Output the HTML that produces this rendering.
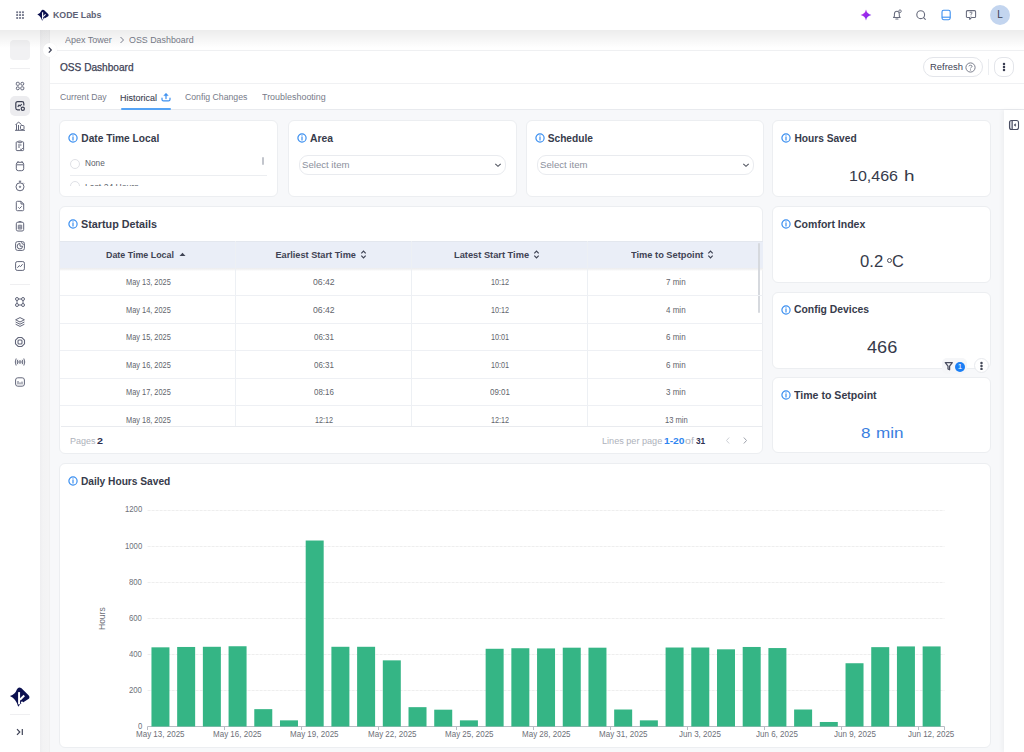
<!DOCTYPE html>
<html><head><meta charset="utf-8">
<style>
*{box-sizing:border-box;margin:0;padding:0}
html,body{width:1024px;height:752px;overflow:hidden;background:#f7f8fa;font-family:"Liberation Sans",sans-serif;color:#363a4a;position:relative}
.abs{position:absolute}
.t{position:absolute;white-space:nowrap}
#top{position:absolute;left:0;top:0;width:1024px;height:30px;background:#fff;z-index:5}
#topshadow{position:absolute;left:0;top:30px;width:1024px;height:18px;background:linear-gradient(rgba(0,0,0,0.075),rgba(0,0,0,0));z-index:6;pointer-events:none}
#side{position:absolute;left:0;top:30px;width:40px;height:722px;background:#fff;z-index:3}
#strip{position:absolute;left:40px;top:30px;width:10px;height:722px;background:linear-gradient(90deg,#eeeef0,#f3f3f4 30%,#f4f4f5 85%,#eeeeef);z-index:2}
#hdr{position:absolute;left:50px;top:30px;width:974px;height:80px;background:#fff}
.hline{position:absolute;height:1px;background:#eceef1}
.card{position:absolute;background:#fff;border:1px solid #eceef1;border-radius:6px}
.ttl{position:absolute;font-weight:bold;font-size:11px;line-height:14px;color:#373b4b;white-space:nowrap}
.kttl{position:absolute;font-weight:bold;font-size:10px;line-height:14px;color:#373b4b;white-space:nowrap}
.info{position:absolute;width:9px;height:9px}
.sel{position:absolute;height:20px;border:1px solid #e9ebef;border-radius:9px;background:#fff}
.sel span{position:absolute;left:3px;top:3px;font-size:10px;line-height:12px;color:#8b909c}
.sel svg{position:absolute;right:3px;top:5px}
.kval{position:absolute;left:0;width:216px;text-align:center;font-size:17px;line-height:20px;color:#363a4a;white-space:nowrap}
.th{position:absolute;top:241px;height:28px;width:176px;text-align:center;font-weight:bold;font-size:9.5px;line-height:28px;color:#3f4354;white-space:nowrap}
.td{position:absolute;width:120px;text-align:center;font-size:8px;line-height:12px;color:#4b4f5e;white-space:nowrap}
.hl{position:absolute;left:60px;width:703px;height:1px;background:#eef0f4}
.vl{position:absolute;width:1px;background:#edf0f4}
.xl{font-size:9px;fill:#6e7079;font-family:"Liberation Sans",sans-serif}
.yl{font-size:8.5px;fill:#6e7079;font-family:"Liberation Sans",sans-serif}
.si{position:absolute;left:14px;width:12px;height:12px}

</style></head><body>
<div id="hdr"></div>
<div class="hline" style="left:57px;top:50px;width:967px;background:#eff0f2"></div>
<div class="hline" style="left:50px;top:83px;width:974px;background:#f0f1f3"></div>
<div class="hline" style="left:50px;top:109px;width:974px;background:#e8eaee"></div>

<!-- breadcrumb -->
<div class="t" style="left:65.46px;top:36.35px;font-size:8.8px;line-height:8.8px;color:#777b89;font-weight:normal;transform:scaleX(1.023);transform-origin:0 0;">Apex Tower</div>
<svg class="abs" style="left:118px;top:36px" width="8" height="8" viewBox="0 0 8 8"><path d="M2.5 1 L5.5 4 L2.5 7" fill="none" stroke="#7c8090" stroke-width="1"/></svg>
<div class="t" style="left:129.17px;top:36.35px;font-size:8.8px;line-height:8.8px;color:#777b89;font-weight:normal;transform:scaleX(1.008);transform-origin:0 0;">OSS Dashboard</div>

<!-- title -->
<div class="t" style="left:59.69px;top:62.23px;font-size:10.6px;line-height:10.6px;color:#3d4155;font-weight:normal;transform:scaleX(0.954);transform-origin:0 0;-webkit-text-stroke:0.25px #3d4155;">OSS Dashboard</div>
<div class="abs" style="left:923px;top:57px;width:60px;height:20px;border:1px solid #e3e5ea;border-radius:10px;background:#fff"></div>
<div class="t" style="left:930.43px;top:62.51px;font-size:9.2px;line-height:9.2px;color:#3f4356;font-weight:normal;transform:scaleX(1.024);transform-origin:0 0;">Refresh</div>
<svg class="abs" style="left:965px;top:62px" width="11" height="11" viewBox="0 0 11 11"><circle cx="5.5" cy="5.5" r="4.6" fill="none" stroke="#7a7e8c" stroke-width="1"/><path d="M3.9 4.3 C3.9 2.9 7.1 2.9 7.1 4.3 C7.1 5.3 5.5 5.3 5.5 6.4" fill="none" stroke="#7a7e8c" stroke-width="1"/><circle cx="5.5" cy="7.9" r="0.6" fill="#7a7e8c"/></svg>
<div class="abs" style="left:988px;top:59px;width:1px;height:16px;background:#eceef1"></div>
<div class="abs" style="left:994px;top:57px;width:20px;height:20px;border:1px solid #e3e5ea;border-radius:8px;background:#fff"></div>
<svg class="abs" style="left:1000px;top:61px" width="8" height="12" viewBox="0 0 8 12"><circle cx="4" cy="2.9" r="1.25" fill="#3a3e52"/><circle cx="4" cy="6" r="1.25" fill="#3a3e52"/><circle cx="4" cy="9.1" r="1.25" fill="#3a3e52"/></svg>

<!-- tabs -->
<div class="t" style="left:59.58px;top:93.31px;font-size:9.2px;line-height:9.2px;color:#777b89;font-weight:normal;transform:scaleX(0.940);transform-origin:0 0;">Current Day</div>
<div class="t" style="left:120.26px;top:93.51px;font-size:9.2px;line-height:9.2px;color:#3a3e50;font-weight:normal;transform:scaleX(0.977);transform-origin:0 0;-webkit-text-stroke:0.1px #3a3e50;">Historical</div>
<svg class="abs" style="left:161px;top:92px" width="10" height="10" viewBox="0 0 10 10"><path d="M5 6.6 V3" fill="none" stroke="#3b8ff0" stroke-width="1.2" stroke-linecap="round"/><path d="M2.8 3.6 L5 1.2 L7.2 3.6 Z" fill="#3b8ff0" stroke="#3b8ff0" stroke-width="0.5" stroke-linejoin="round"/><path d="M1 6.2 V7.4 Q1 8.9 2.5 8.9 H7.5 Q9 8.9 9 7.4 V6.2" fill="none" stroke="#3b8ff0" stroke-width="1.2" stroke-linecap="round"/></svg>
<div class="abs" style="left:121px;top:107.5px;width:50px;height:2px;background:#55a3f5;border-radius:1px"></div>
<div class="t" style="left:185.18px;top:93.31px;font-size:9.2px;line-height:9.2px;color:#777b89;font-weight:normal;transform:scaleX(0.947);transform-origin:0 0;">Config Changes</div>
<div class="t" style="left:262.26px;top:93.31px;font-size:9.2px;line-height:9.2px;color:#777b89;font-weight:normal;transform:scaleX(0.973);transform-origin:0 0;">Troubleshooting</div>

<!-- right panel -->
<div class="abs" style="left:1004px;top:110px;width:20px;height:642px;background:#fff;box-shadow:-2px 0 4px rgba(0,0,0,0.04)"></div>
<svg class="abs" style="left:1008px;top:119px" width="12" height="12" viewBox="0 0 12 12"><rect x="1.8" y="1.8" width="2.4" height="8.4" fill="#d5d7de"/><rect x="1.5" y="1.5" width="9" height="9" rx="2" fill="none" stroke="#4a4e62" stroke-width="1.1"/><path d="M4.2 1.5 V10.5" stroke="#4a4e62" stroke-width="1.1"/><path d="M7.6 4.8 L6 6 L7.6 7.2 Z" fill="#4a4e62" stroke="#4a4e62" stroke-width="0.6" stroke-linejoin="round"/></svg>

<!-- cards -->
<div class="card" style="left:59px;top:120px;width:219px;height:77px"></div>
<div class="card" style="left:288px;top:120px;width:229px;height:77px"></div>
<div class="card" style="left:526px;top:120px;width:238px;height:77px"></div>
<div class="card" style="left:772px;top:120px;width:219px;height:77px"></div>
<div class="card" style="left:59px;top:206px;width:704px;height:248px;overflow:hidden"></div>
<div class="card" style="left:772px;top:206px;width:219px;height:77px"></div>
<div class="card" style="left:772px;top:292px;width:219px;height:77px"></div>
<div class="card" style="left:772px;top:377px;width:219px;height:76px"></div>
<div class="card" style="left:59px;top:463px;width:932px;height:285px"></div>

<!-- filter cards -->
<div class="info" style="left:68px;top:134px"><svg width="10" height="10" viewBox="0 0 10 10" style="position:absolute;left:-0.5px;top:-0.8px"><circle cx="5" cy="5" r="4.1" fill="none" stroke="#3b8ff0" stroke-width="1.2"/><path d="M5 4.4 V7" stroke="#3b8ff0" stroke-width="1.2" stroke-linecap="round"/><circle cx="5" cy="2.9" r="0.65" fill="#3b8ff0"/></svg></div>
<div class="t" style="left:81.29px;top:133.87px;font-size:10.2px;line-height:10.2px;color:#373b4b;font-weight:bold;">Date Time Local</div>
<div class="abs" style="left:70px;top:158.5px;width:10px;height:10px;border:1px solid #dfe1e6;border-radius:50%"></div>
<div class="t" style="left:84.60px;top:159.22px;font-size:8.6px;line-height:8.6px;color:#5a5e68;font-weight:normal;transform:scaleX(0.960);transform-origin:0 0;">None</div>
<div class="abs" style="left:262px;top:157px;width:2px;height:8px;background:#c2c5cc;border-radius:1px"></div>
<div class="abs" style="left:70px;top:175px;width:197px;height:1px;background:#eceef1"></div>
<div class="abs" style="left:64px;top:179px;width:210px;height:7px;overflow:hidden">
  <div class="abs" style="left:6px;top:2px;width:10px;height:10px;border:1px solid #dfe1e6;border-radius:50%"></div>
  <div class="t" style="left:21px;top:3px;font-size:8.6px;line-height:11px;color:#5a5e68">Last 24 Hours</div>
</div>

<div class="info" style="left:297px;top:134px"><svg width="10" height="10" viewBox="0 0 10 10" style="position:absolute;left:-0.5px;top:-0.8px"><circle cx="5" cy="5" r="4.1" fill="none" stroke="#3b8ff0" stroke-width="1.2"/><path d="M5 4.4 V7" stroke="#3b8ff0" stroke-width="1.2" stroke-linecap="round"/><circle cx="5" cy="2.9" r="0.65" fill="#3b8ff0"/></svg></div>
<div class="t" style="left:309.58px;top:133.97px;font-size:10.2px;line-height:10.2px;color:#373b4b;font-weight:bold;transform:scaleX(1.017);transform-origin:0 0;">Area</div>
<div class="sel" style="left:299px;top:155px;width:207px"><svg width="8" height="8" viewBox="0 0 8 8"><path d="M1.3 2.8 L4 5.3 L6.7 2.8" fill="none" stroke="#50545f" stroke-width="1.1"/></svg></div>

<div class="info" style="left:535px;top:134px"><svg width="10" height="10" viewBox="0 0 10 10" style="position:absolute;left:-0.5px;top:-0.8px"><circle cx="5" cy="5" r="4.1" fill="none" stroke="#3b8ff0" stroke-width="1.2"/><path d="M5 4.4 V7" stroke="#3b8ff0" stroke-width="1.2" stroke-linecap="round"/><circle cx="5" cy="2.9" r="0.65" fill="#3b8ff0"/></svg></div>
<div class="t" style="left:547.69px;top:133.97px;font-size:10.2px;line-height:10.2px;color:#373b4b;font-weight:bold;">Schedule</div>
<div class="sel" style="left:537px;top:155px;width:217px"><svg width="8" height="8" viewBox="0 0 8 8"><path d="M1.3 2.8 L4 5.3 L6.7 2.8" fill="none" stroke="#50545f" stroke-width="1.1"/></svg></div>

<div class="t" style="left:301.82px;top:160.44px;font-size:9.4px;line-height:9.4px;color:#8b909c;font-weight:normal;transform:scaleX(1.024);transform-origin:0 0;">Select item</div><div class="t" style="left:539.82px;top:160.44px;font-size:9.4px;line-height:9.4px;color:#8b909c;font-weight:normal;transform:scaleX(1.024);transform-origin:0 0;">Select item</div>
<!-- KPI cards -->
<div class="info" style="left:781px;top:134px"><svg width="10" height="10" viewBox="0 0 10 10" style="position:absolute;left:-0.5px;top:-0.8px"><circle cx="5" cy="5" r="4.1" fill="none" stroke="#3b8ff0" stroke-width="1.2"/><path d="M5 4.4 V7" stroke="#3b8ff0" stroke-width="1.2" stroke-linecap="round"/><circle cx="5" cy="2.9" r="0.65" fill="#3b8ff0"/></svg></div>
<div class="t" style="left:794.39px;top:134.07px;font-size:10.2px;line-height:10.2px;color:#373b4b;font-weight:bold;">Hours Saved</div>
<div class="t" style="left:849.34px;top:167.85px;font-size:15.3px;line-height:15.3px;color:#363a4a;font-weight:normal;transform:scaleX(1.047);transform-origin:0 0;">10,466</div><div class="t" style="left:904.37px;top:167.85px;font-size:15.3px;line-height:15.3px;color:#363a4a;font-weight:normal;transform:scaleX(1.233);transform-origin:0 0;">h</div>

<div class="info" style="left:781px;top:220px"><svg width="10" height="10" viewBox="0 0 10 10" style="position:absolute;left:-0.5px;top:-0.8px"><circle cx="5" cy="5" r="4.1" fill="none" stroke="#3b8ff0" stroke-width="1.2"/><path d="M5 4.4 V7" stroke="#3b8ff0" stroke-width="1.2" stroke-linecap="round"/><circle cx="5" cy="2.9" r="0.65" fill="#3b8ff0"/></svg></div>
<div class="t" style="left:794.37px;top:220.17px;font-size:10.2px;line-height:10.2px;color:#373b4b;font-weight:bold;transform:scaleX(1.033);transform-origin:0 0;">Comfort Index</div>
<div class="t" style="left:860.40px;top:253.59px;font-size:15.6px;line-height:15.6px;color:#363a4a;font-weight:normal;transform:scaleX(1.069);transform-origin:0 0;">0.2</div><div class="abs" style="left:887.2px;top:257.9px;width:5px;height:5px;border:1.2px solid #4a4e5c;border-radius:50%"></div><div class="t" style="left:892.02px;top:253.59px;font-size:15.6px;line-height:15.6px;color:#363a4a;font-weight:normal;transform:scaleX(1.051);transform-origin:0 0;">C</div>

<div class="info" style="left:781px;top:306px"><svg width="10" height="10" viewBox="0 0 10 10" style="position:absolute;left:-0.5px;top:-0.8px"><circle cx="5" cy="5" r="4.1" fill="none" stroke="#3b8ff0" stroke-width="1.2"/><path d="M5 4.4 V7" stroke="#3b8ff0" stroke-width="1.2" stroke-linecap="round"/><circle cx="5" cy="2.9" r="0.65" fill="#3b8ff0"/></svg></div>
<div class="t" style="left:794.18px;top:305.37px;font-size:10.2px;line-height:10.2px;color:#373b4b;font-weight:bold;transform:scaleX(1.020);transform-origin:0 0;">Config Devices</div>
<div class="t" style="left:866.91px;top:339.76px;font-size:16px;line-height:16px;color:#363a4a;font-weight:normal;transform:scaleX(1.132);transform-origin:0 0;">466</div>
<div class="abs" style="left:941.5px;top:358px;width:25px;height:16px;background:#f5f6f8;border-radius:5px"></div>
<svg class="abs" style="left:944px;top:361px" width="10" height="10" viewBox="0 0 10 10"><path d="M1.3 1.6 H8.3 L5.6 5.1 V8.8 L4 8 V5.1 Z" fill="none" stroke="#4a4e60" stroke-width="1.25" stroke-linejoin="round"/></svg>
<div class="abs" style="left:955px;top:361.6px;width:10.2px;height:10.2px;border-radius:50%;background:#1b7ff5;color:#fff;font-size:8px;line-height:10.2px;text-align:center">1</div>
<div class="abs" style="left:974px;top:358px;width:15px;height:15px;border:1px solid #e8eaee;border-radius:50%;background:#fff"></div>
<svg class="abs" style="left:977px;top:361px" width="9" height="9" viewBox="0 0 9 9"><circle cx="4.5" cy="1.9" r="1.25" fill="#444858"/><circle cx="4.5" cy="4.9" r="1.25" fill="#444858"/><circle cx="4.5" cy="7.9" r="1.25" fill="#444858"/></svg>

<div class="info" style="left:781px;top:391px"><svg width="10" height="10" viewBox="0 0 10 10" style="position:absolute;left:-0.5px;top:-0.8px"><circle cx="5" cy="5" r="4.1" fill="none" stroke="#3b8ff0" stroke-width="1.2"/><path d="M5 4.4 V7" stroke="#3b8ff0" stroke-width="1.2" stroke-linecap="round"/><circle cx="5" cy="2.9" r="0.65" fill="#3b8ff0"/></svg></div>
<div class="t" style="left:794.36px;top:390.87px;font-size:10.2px;line-height:10.2px;color:#373b4b;font-weight:bold;transform:scaleX(1.038);transform-origin:0 0;">Time to Setpoint</div>
<div class="t" style="left:860.67px;top:424.95px;font-size:15.3px;line-height:15.3px;color:#3a7ee0;font-weight:normal;transform:scaleX(1.118);transform-origin:0 0;">8</div><div class="t" style="left:876.28px;top:424.95px;font-size:15.3px;line-height:15.3px;color:#3a7ee0;font-weight:normal;transform:scaleX(1.116);transform-origin:0 0;">min</div>

<!-- startup details -->
<div class="info" style="left:68px;top:220px"><svg width="10" height="10" viewBox="0 0 10 10" style="position:absolute;left:-0.5px;top:-0.8px"><circle cx="5" cy="5" r="4.1" fill="none" stroke="#3b8ff0" stroke-width="1.2"/><path d="M5 4.4 V7" stroke="#3b8ff0" stroke-width="1.2" stroke-linecap="round"/><circle cx="5" cy="2.9" r="0.65" fill="#3b8ff0"/></svg></div>
<div class="t" style="left:80.85px;top:219.67px;font-size:10.2px;line-height:10.2px;color:#373b4b;font-weight:bold;transform:scaleX(1.058);transform-origin:0 0;">Startup Details</div>
<div class="abs" style="left:60px;top:241px;width:703px;height:27px;background:#eaeef7;border-top:1px solid #e3e7ee"></div>
<div class="abs" style="left:60px;top:268px;width:703px;height:3px;background:linear-gradient(#ececee,#f4f4f5 60%,rgba(255,255,255,0))"></div>
<div class="t" style="left:106.37px;top:250.91px;font-size:9.2px;line-height:9.2px;color:#3f4354;font-weight:bold;transform:scaleX(0.967);transform-origin:0 0;">Date Time Local</div>
<svg class="abs" style="left:179px;top:252px" width="7" height="5" viewBox="0 0 7 5"><path d="M0.5 4 L3.5 0.8 L6.5 4 Z" fill="#3f4354"/></svg>
<div class="t" style="left:275.45px;top:250.91px;font-size:9.2px;line-height:9.2px;color:#3f4354;font-weight:bold;">Earliest Start Time</div>
<svg class="abs" style="left:359.6px;top:250px" width="7" height="9" viewBox="0 0 7 9"><path d="M1.3 3.4 L3.5 1.2 L5.7 3.4 M1.3 5.6 L3.5 7.8 L5.7 5.6" fill="none" stroke="#3f4354" stroke-width="1.2"/></svg>
<div class="t" style="left:453.64px;top:250.91px;font-size:9.2px;line-height:9.2px;color:#3f4354;font-weight:bold;transform:scaleX(1.009);transform-origin:0 0;">Latest Start Time</div>
<svg class="abs" style="left:532.8px;top:250px" width="7" height="9" viewBox="0 0 7 9"><path d="M1.3 3.4 L3.5 1.2 L5.7 3.4 M1.3 5.6 L3.5 7.8 L5.7 5.6" fill="none" stroke="#3f4354" stroke-width="1.2"/></svg>
<div class="t" style="left:630.64px;top:250.91px;font-size:9.2px;line-height:9.2px;color:#3f4354;font-weight:bold;transform:scaleX(1.009);transform-origin:0 0;">Time to Setpoint</div>
<svg class="abs" style="left:707.2px;top:250px" width="7" height="9" viewBox="0 0 7 9"><path d="M1.3 3.4 L3.5 1.2 L5.7 3.4 M1.3 5.6 L3.5 7.8 L5.7 5.6" fill="none" stroke="#3f4354" stroke-width="1.2"/></svg>
<div class="vl" style="left:235px;top:241px;height:186px"></div>
<div class="vl" style="left:411px;top:241px;height:186px"></div>
<div class="vl" style="left:587px;top:241px;height:186px"></div>
<div class="abs" style="left:757.5px;top:243px;width:2.5px;height:70px;background:#d6d9de;border-radius:1px"></div>
<div class="t" style="left:125.58px;top:278.25px;font-size:8.8px;line-height:8.8px;color:#62656c;font-weight:normal;transform:scaleX(0.841);transform-origin:0 0;">May 13, 2025</div><div class="t" style="left:313.17px;top:278.25px;font-size:8.8px;line-height:8.8px;color:#62656c;font-weight:normal;transform:scaleX(0.984);transform-origin:0 0;">06:42</div><div class="t" style="left:490.94px;top:278.25px;font-size:8.8px;line-height:8.8px;color:#62656c;font-weight:normal;transform:scaleX(0.823);transform-origin:0 0;">10:12</div><div class="t" style="left:666.20px;top:278.25px;font-size:8.8px;line-height:8.8px;color:#62656c;font-weight:normal;transform:scaleX(0.911);transform-origin:0 0;">7 min</div><div class="hl" style="top:295px"></div><div class="t" style="left:125.58px;top:305.70px;font-size:8.8px;line-height:8.8px;color:#62656c;font-weight:normal;transform:scaleX(0.841);transform-origin:0 0;">May 14, 2025</div><div class="t" style="left:313.17px;top:305.70px;font-size:8.8px;line-height:8.8px;color:#62656c;font-weight:normal;transform:scaleX(0.984);transform-origin:0 0;">06:42</div><div class="t" style="left:490.94px;top:305.70px;font-size:8.8px;line-height:8.8px;color:#62656c;font-weight:normal;transform:scaleX(0.823);transform-origin:0 0;">10:12</div><div class="t" style="left:666.20px;top:305.70px;font-size:8.8px;line-height:8.8px;color:#62656c;font-weight:normal;transform:scaleX(0.911);transform-origin:0 0;">4 min</div><div class="hl" style="top:323px"></div><div class="t" style="left:125.58px;top:333.15px;font-size:8.8px;line-height:8.8px;color:#62656c;font-weight:normal;transform:scaleX(0.841);transform-origin:0 0;">May 15, 2025</div><div class="t" style="left:314.05px;top:333.15px;font-size:8.8px;line-height:8.8px;color:#62656c;font-weight:normal;transform:scaleX(0.904);transform-origin:0 0;">06:31</div><div class="t" style="left:490.94px;top:333.15px;font-size:8.8px;line-height:8.8px;color:#62656c;font-weight:normal;transform:scaleX(0.823);transform-origin:0 0;">10:01</div><div class="t" style="left:666.20px;top:333.15px;font-size:8.8px;line-height:8.8px;color:#62656c;font-weight:normal;transform:scaleX(0.911);transform-origin:0 0;">6 min</div><div class="hl" style="top:350px"></div><div class="t" style="left:125.58px;top:360.60px;font-size:8.8px;line-height:8.8px;color:#62656c;font-weight:normal;transform:scaleX(0.841);transform-origin:0 0;">May 16, 2025</div><div class="t" style="left:314.05px;top:360.60px;font-size:8.8px;line-height:8.8px;color:#62656c;font-weight:normal;transform:scaleX(0.904);transform-origin:0 0;">06:31</div><div class="t" style="left:490.94px;top:360.60px;font-size:8.8px;line-height:8.8px;color:#62656c;font-weight:normal;transform:scaleX(0.823);transform-origin:0 0;">10:01</div><div class="t" style="left:666.20px;top:360.60px;font-size:8.8px;line-height:8.8px;color:#62656c;font-weight:normal;transform:scaleX(0.911);transform-origin:0 0;">6 min</div><div class="hl" style="top:378px"></div><div class="t" style="left:125.58px;top:388.05px;font-size:8.8px;line-height:8.8px;color:#62656c;font-weight:normal;transform:scaleX(0.841);transform-origin:0 0;">May 17, 2025</div><div class="t" style="left:314.05px;top:388.05px;font-size:8.8px;line-height:8.8px;color:#62656c;font-weight:normal;transform:scaleX(0.904);transform-origin:0 0;">08:16</div><div class="t" style="left:490.05px;top:388.05px;font-size:8.8px;line-height:8.8px;color:#62656c;font-weight:normal;transform:scaleX(0.904);transform-origin:0 0;">09:01</div><div class="t" style="left:666.20px;top:388.05px;font-size:8.8px;line-height:8.8px;color:#62656c;font-weight:normal;transform:scaleX(0.911);transform-origin:0 0;">3 min</div><div class="hl" style="top:405px"></div><div class="t" style="left:125.58px;top:415.50px;font-size:8.8px;line-height:8.8px;color:#62656c;font-weight:normal;transform:scaleX(0.841);transform-origin:0 0;">May 18, 2025</div><div class="t" style="left:314.94px;top:415.50px;font-size:8.8px;line-height:8.8px;color:#62656c;font-weight:normal;transform:scaleX(0.823);transform-origin:0 0;">12:12</div><div class="t" style="left:490.94px;top:415.50px;font-size:8.8px;line-height:8.8px;color:#62656c;font-weight:normal;transform:scaleX(0.823);transform-origin:0 0;">12:12</div><div class="t" style="left:664.62px;top:415.50px;font-size:8.8px;line-height:8.8px;color:#62656c;font-weight:normal;transform:scaleX(0.862);transform-origin:0 0;">13 min</div>
<div class="abs" style="left:61px;top:426px;width:701px;height:1px;background:#e9ebef"></div>
<div class="t" style="left:69.66px;top:435.77px;font-size:9.6px;line-height:9.6px;color:#aeb2bb;font-weight:normal;transform:scaleX(0.937);transform-origin:0 0;">Pages</div><div class="t" style="left:96.65px;top:435.77px;font-size:9.6px;line-height:9.6px;color:#2c3050;font-weight:bold;transform:scaleX(1.120);transform-origin:0 0;">2</div>
<div class="t" style="left:602.15px;top:435.77px;font-size:9.6px;line-height:9.6px;color:#aeb2bb;font-weight:normal;transform:scaleX(0.949);transform-origin:0 0;">Lines per page</div><div class="t" style="left:663.58px;top:435.77px;font-size:9.6px;line-height:9.6px;color:#2f86f0;font-weight:bold;transform:scaleX(1.069);transform-origin:0 0;">1-20</div><div class="t" style="left:684.86px;top:435.77px;font-size:9.6px;line-height:9.6px;color:#aeb2bb;font-weight:normal;transform:scaleX(1.108);transform-origin:0 0;">of</div><div class="t" style="left:695.90px;top:435.77px;font-size:9.6px;line-height:9.6px;color:#2c3050;font-weight:bold;transform:scaleX(0.865);transform-origin:0 0;">31</div>
<svg class="abs" style="left:724px;top:436px" width="8" height="9" viewBox="0 0 8 9"><path d="M5.2 1.5 L2.5 4.5 L5.2 7.5" fill="none" stroke="#cdd0d6" stroke-width="1"/></svg>
<svg class="abs" style="left:741px;top:436px" width="8" height="9" viewBox="0 0 8 9"><path d="M2.8 1.5 L5.5 4.5 L2.8 7.5" fill="none" stroke="#9ea2ac" stroke-width="1"/></svg>

<!-- chart -->
<div class="info" style="left:68px;top:477px"><svg width="10" height="10" viewBox="0 0 10 10" style="position:absolute;left:-0.5px;top:-0.8px"><circle cx="5" cy="5" r="4.1" fill="none" stroke="#3b8ff0" stroke-width="1.2"/><path d="M5 4.4 V7" stroke="#3b8ff0" stroke-width="1.2" stroke-linecap="round"/><circle cx="5" cy="2.9" r="0.65" fill="#3b8ff0"/></svg></div>
<div class="t" style="left:80.89px;top:476.87px;font-size:10.2px;line-height:10.2px;color:#373b4b;font-weight:bold;">Daily Hours Saved</div>
<svg class="abs" style="left:0;top:0" width="1024" height="752" viewBox="0 0 1024 752"><line x1="147.6" y1="690.5" x2="944.5" y2="690.5" stroke="#eeeeee" stroke-width="1" stroke-dasharray="3,1"/><line x1="147.6" y1="654.5" x2="944.5" y2="654.5" stroke="#eeeeee" stroke-width="1" stroke-dasharray="3,1"/><line x1="147.6" y1="618.5" x2="944.5" y2="618.5" stroke="#eeeeee" stroke-width="1" stroke-dasharray="3,1"/><line x1="147.6" y1="582.5" x2="944.5" y2="582.5" stroke="#eeeeee" stroke-width="1" stroke-dasharray="3,1"/><line x1="147.6" y1="546.5" x2="944.5" y2="546.5" stroke="#eeeeee" stroke-width="1" stroke-dasharray="3,1"/><line x1="147.6" y1="510.5" x2="944.5" y2="510.5" stroke="#eeeeee" stroke-width="1" stroke-dasharray="3,1"/><line x1="147.6" y1="726.5" x2="944.5" y2="726.5" stroke="#b9bcc4" stroke-width="1"/><rect x="151.46" y="647.33" width="17.99" height="79.17" fill="#35b585"/><rect x="177.16" y="646.97" width="17.99" height="79.53" fill="#35b585"/><rect x="202.87" y="646.79" width="17.99" height="79.71" fill="#35b585"/><rect x="228.58" y="646.25" width="17.99" height="80.25" fill="#35b585"/><rect x="254.28" y="709.15" width="17.99" height="17.35" fill="#35b585"/><rect x="279.99" y="720.35" width="17.99" height="6.15" fill="#35b585"/><rect x="305.69" y="540.51" width="17.99" height="185.99" fill="#35b585"/><rect x="331.40" y="646.79" width="17.99" height="79.71" fill="#35b585"/><rect x="357.11" y="646.79" width="17.99" height="79.71" fill="#35b585"/><rect x="382.81" y="660.35" width="17.99" height="66.15" fill="#35b585"/><rect x="408.52" y="707.16" width="17.99" height="19.34" fill="#35b585"/><rect x="434.23" y="709.69" width="17.99" height="16.81" fill="#35b585"/><rect x="459.93" y="720.35" width="17.99" height="6.15" fill="#35b585"/><rect x="485.64" y="648.78" width="17.99" height="77.72" fill="#35b585"/><rect x="511.35" y="648.24" width="17.99" height="78.26" fill="#35b585"/><rect x="537.05" y="648.42" width="17.99" height="78.08" fill="#35b585"/><rect x="562.76" y="647.69" width="17.99" height="78.81" fill="#35b585"/><rect x="588.47" y="647.69" width="17.99" height="78.81" fill="#35b585"/><rect x="614.17" y="709.51" width="17.99" height="16.99" fill="#35b585"/><rect x="639.88" y="720.35" width="17.99" height="6.15" fill="#35b585"/><rect x="665.59" y="647.51" width="17.99" height="78.99" fill="#35b585"/><rect x="691.29" y="647.51" width="17.99" height="78.99" fill="#35b585"/><rect x="717.00" y="649.32" width="17.99" height="77.18" fill="#35b585"/><rect x="742.70" y="646.97" width="17.99" height="79.53" fill="#35b585"/><rect x="768.41" y="648.05" width="17.99" height="78.45" fill="#35b585"/><rect x="794.12" y="709.51" width="17.99" height="16.99" fill="#35b585"/><rect x="819.82" y="721.98" width="17.99" height="4.52" fill="#35b585"/><rect x="845.53" y="663.24" width="17.99" height="63.26" fill="#35b585"/><rect x="871.24" y="647.15" width="17.99" height="79.35" fill="#35b585"/><rect x="896.94" y="646.43" width="17.99" height="80.07" fill="#35b585"/><rect x="922.65" y="646.43" width="17.99" height="80.07" fill="#35b585"/><line x1="147.5" y1="726.5" x2="147.5" y2="730.0" stroke="#b9bcc4" stroke-width="1"/><line x1="224.5" y1="726.5" x2="224.5" y2="730.0" stroke="#b9bcc4" stroke-width="1"/><line x1="301.5" y1="726.5" x2="301.5" y2="730.0" stroke="#b9bcc4" stroke-width="1"/><line x1="378.5" y1="726.5" x2="378.5" y2="730.0" stroke="#b9bcc4" stroke-width="1"/><line x1="456.5" y1="726.5" x2="456.5" y2="730.0" stroke="#b9bcc4" stroke-width="1"/><line x1="533.5" y1="726.5" x2="533.5" y2="730.0" stroke="#b9bcc4" stroke-width="1"/><line x1="610.5" y1="726.5" x2="610.5" y2="730.0" stroke="#b9bcc4" stroke-width="1"/><line x1="687.5" y1="726.5" x2="687.5" y2="730.0" stroke="#b9bcc4" stroke-width="1"/><line x1="764.5" y1="726.5" x2="764.5" y2="730.0" stroke="#b9bcc4" stroke-width="1"/><line x1="841.5" y1="726.5" x2="841.5" y2="730.0" stroke="#b9bcc4" stroke-width="1"/><line x1="918.5" y1="726.5" x2="918.5" y2="730.0" stroke="#b9bcc4" stroke-width="1"/><line x1="944.5" y1="726.5" x2="944.5" y2="730.0" stroke="#b9bcc4" stroke-width="1"/></svg><div class="t" style="left:136.18px;top:730.38px;font-size:9px;line-height:9px;color:#6e7079;font-weight:normal;transform:scaleX(0.890);transform-origin:0 0;">May 13, 2025</div><div class="t" style="left:213.30px;top:730.38px;font-size:9px;line-height:9px;color:#6e7079;font-weight:normal;transform:scaleX(0.890);transform-origin:0 0;">May 16, 2025</div><div class="t" style="left:290.42px;top:730.38px;font-size:9px;line-height:9px;color:#6e7079;font-weight:normal;transform:scaleX(0.890);transform-origin:0 0;">May 19, 2025</div><div class="t" style="left:367.54px;top:730.38px;font-size:9px;line-height:9px;color:#6e7079;font-weight:normal;transform:scaleX(0.890);transform-origin:0 0;">May 22, 2025</div><div class="t" style="left:444.66px;top:730.38px;font-size:9px;line-height:9px;color:#6e7079;font-weight:normal;transform:scaleX(0.890);transform-origin:0 0;">May 25, 2025</div><div class="t" style="left:521.78px;top:730.38px;font-size:9px;line-height:9px;color:#6e7079;font-weight:normal;transform:scaleX(0.890);transform-origin:0 0;">May 28, 2025</div><div class="t" style="left:598.90px;top:730.38px;font-size:9px;line-height:9px;color:#6e7079;font-weight:normal;transform:scaleX(0.890);transform-origin:0 0;">May 31, 2025</div><div class="t" style="left:679.36px;top:730.38px;font-size:9px;line-height:9px;color:#6e7079;font-weight:normal;transform:scaleX(0.890);transform-origin:0 0;">Jun 3, 2025</div><div class="t" style="left:756.48px;top:730.38px;font-size:9px;line-height:9px;color:#6e7079;font-weight:normal;transform:scaleX(0.890);transform-origin:0 0;">Jun 6, 2025</div><div class="t" style="left:833.60px;top:730.38px;font-size:9px;line-height:9px;color:#6e7079;font-weight:normal;transform:scaleX(0.890);transform-origin:0 0;">Jun 9, 2025</div><div class="t" style="left:908.49px;top:730.38px;font-size:9px;line-height:9px;color:#6e7079;font-weight:normal;transform:scaleX(0.890);transform-origin:0 0;">Jun 12, 2025</div><div class="t" style="left:138.01px;top:722.30px;font-size:8.5px;line-height:8.5px;color:#6e7079;font-weight:normal;transform:scaleX(0.910);transform-origin:0 0;">0</div><div class="t" style="left:129.40px;top:686.15px;font-size:8.5px;line-height:8.5px;color:#6e7079;font-weight:normal;transform:scaleX(0.910);transform-origin:0 0;">200</div><div class="t" style="left:129.40px;top:650.00px;font-size:8.5px;line-height:8.5px;color:#6e7079;font-weight:normal;transform:scaleX(0.910);transform-origin:0 0;">400</div><div class="t" style="left:129.40px;top:613.85px;font-size:8.5px;line-height:8.5px;color:#6e7079;font-weight:normal;transform:scaleX(0.910);transform-origin:0 0;">600</div><div class="t" style="left:129.40px;top:577.70px;font-size:8.5px;line-height:8.5px;color:#6e7079;font-weight:normal;transform:scaleX(0.910);transform-origin:0 0;">800</div><div class="t" style="left:125.10px;top:541.55px;font-size:8.5px;line-height:8.5px;color:#6e7079;font-weight:normal;transform:scaleX(0.910);transform-origin:0 0;">1000</div><div class="t" style="left:125.10px;top:505.40px;font-size:8.5px;line-height:8.5px;color:#6e7079;font-weight:normal;transform:scaleX(0.910);transform-origin:0 0;">1200</div><div class="t" style="left:92px;top:615px;font-size:8.5px;line-height:10px;color:#6e7079;transform:rotate(-90deg);transform-origin:center;width:20px;text-align:center">Hours</div>

<!-- top bar -->
<div id="top">
  <svg class="abs" style="left:16px;top:11px" width="8" height="8" viewBox="0 0 8 8"><g fill="#777b8e"><rect x="0.15" y="0.15" width="2" height="2" rx=".6"/><rect x="3.05" y="0.15" width="2" height="2" rx=".6"/><rect x="5.95" y="0.15" width="2" height="2" rx=".6"/><rect x="0.15" y="3.05" width="2" height="2" rx=".6"/><rect x="3.05" y="3.05" width="2" height="2" rx=".6"/><rect x="5.95" y="3.05" width="2" height="2" rx=".6"/><rect x="0.15" y="5.95" width="2" height="2" rx=".6"/><rect x="3.05" y="5.95" width="2" height="2" rx=".6"/><rect x="5.95" y="5.95" width="2" height="2" rx=".6"/></g></svg>
  <svg class="abs" style="left:35px;top:7px" width="14" height="14" viewBox="0 0 14 14"><path d="M2.3 7.6 Q5.4 6.6 6.3 3.8 Q7.3 1.9 9 3.1 L13.1 7.1 Q14.3 8.4 12.8 9.5 L10.3 11.1 Q8.2 11.9 7.1 13.8 Q6 9.4 2.3 7.6 Z" fill="#0c1150"/><path d="M7.6 5.3 V12.4" stroke="#fff" stroke-width="1.15"/><path d="M10.6 7.3 L8.1 9.7" stroke="#fff" stroke-width="1.15"/><path d="M8.7 11.3 L9.9 11.3" stroke="#fff" stroke-width="0.9"/></svg>
  <div class="t" style="left:53.47px;top:11.27px;font-size:8.9px;line-height:8.9px;color:#5d6175;font-weight:bold;transform:scaleX(0.989);transform-origin:0 0;">KODE Labs</div>
  <svg class="abs" style="left:860px;top:9px" width="12" height="12" viewBox="0 0 12 12"><defs><linearGradient id="sp" x1="0" y1="0" x2="1" y2="1"><stop offset="0" stop-color="#c428e6"/><stop offset="1" stop-color="#6a2bf0"/></linearGradient></defs><path d="M6 0.6 Q6.9 5.1 11.4 6 Q6.9 6.9 6 11.4 Q5.1 6.9 0.6 6 Q5.1 5.1 6 0.6 Z" fill="url(#sp)"/></svg>
  <svg class="abs" style="left:891px;top:9px" width="12" height="12" viewBox="0 0 12 12"><path d="M2.5 8.5 H9.2 L8.3 7.2 V5.2 Q8.3 2.3 5.9 2.3 Q3.4 2.3 3.4 5.2 V7.2 Z M4.8 10 H7" fill="none" stroke="#676b7d" stroke-width="1.05" stroke-linejoin="round" stroke-linecap="round"/><circle cx="9" cy="2.2" r="1.3" fill="#fff" stroke="#676b7d" stroke-width="0.9"/></svg>
  <svg class="abs" style="left:915px;top:9px" width="12" height="12" viewBox="0 0 12 12"><circle cx="5.7" cy="5.7" r="3.9" fill="none" stroke="#676b7d" stroke-width="1.1"/><path d="M8.6 8.6 L10.3 10.3" stroke="#676b7d" stroke-width="1.1" stroke-linecap="round"/></svg>
  <svg class="abs" style="left:940px;top:9px" width="12" height="12" viewBox="0 0 12 12"><rect x="2" y="1.3" width="8.2" height="9.4" rx="1.6" fill="none" stroke="#3b8ff0" stroke-width="1.1"/><path d="M2 8.2 H10.2" stroke="#3b8ff0" stroke-width="1.1"/></svg>
  <svg class="abs" style="left:965px;top:9px" width="12" height="12" viewBox="0 0 12 12"><path d="M2.5 1.6 H9.5 Q10.6 1.6 10.6 2.7 V7.4 Q10.6 8.5 9.5 8.5 H6.6 L4.8 10.4 V8.5 H2.5 Q1.4 8.5 1.4 7.4 V2.7 Q1.4 1.6 2.5 1.6 Z" fill="none" stroke="#676b7d" stroke-width="1.05" stroke-linejoin="round"/><path d="M4.9 4.1 Q4.9 3 6 3 Q7.1 3 7.1 4 Q7.1 4.8 6 5.2 V5.9" fill="none" stroke="#676b7d" stroke-width="0.9"/><circle cx="6" cy="7.1" r="0.5" fill="#676b7d"/></svg>
  <div class="abs" style="left:990px;top:5px;width:20px;height:20px;border-radius:50%;background:#c3d5ef;color:#3b3f52;font-size:10px;line-height:20px;text-align:center">L</div>
</div>
<div id="topshadow"></div>

<!-- sidebar -->
<div id="side">
  <div class="abs" style="left:10px;top:10px;width:20px;height:20px;border-radius:4px;background:#f1f1f3"></div>
  <div class="abs" style="left:10px;top:38px;width:20px;height:1px;background:#efeff1"></div>
  <div class="abs" style="left:10px;top:66px;width:20px;height:20px;border-radius:5px;background:#ececef"></div>
  <svg class="si" style="top:50px" viewBox="0 0 12 12"><g fill="none" stroke="#62667a" stroke-width="1"><rect x="2.3" y="2.3" width="3" height="3" rx="0.9"/><rect x="6.8" y="2.3" width="3" height="3" rx="1.5"/><rect x="2.3" y="6.8" width="3" height="3" rx="1.5"/><rect x="6.8" y="6.8" width="3" height="3" rx="0.9"/></g></svg>
  <svg class="si" style="top:70px" viewBox="0 0 12 12"><g fill="none" stroke="#3c4054" stroke-width="1.2"><path d="M9.8 5.5 V3.4 Q9.8 1.6 8 1.6 H3.6 Q1.8 1.6 1.8 3.4 V8 Q1.8 9.8 3.6 9.8 H6"/><path d="M3.8 6.8 L5 5.1 L6.2 6 L7.7 4"/><circle cx="8.8" cy="8.8" r="1.6"/></g></svg>
  <svg class="si" style="top:90px" viewBox="0 0 12 12"><g fill="none" stroke="#62667a" stroke-width="1"><path d="M1.5 5 L4.5 2 L7.5 4.5 M2.5 4.3 V10.3 M4.5 5 V10.3"/><rect x="6.5" y="5.5" width="3.5" height="4" rx=".8"/><path d="M1 10.3 H11"/></g></svg>
  <svg class="si" style="top:110px" viewBox="0 0 12 12"><g fill="none" stroke="#62667a" stroke-width="1"><path d="M4.2 1.8 H3 Q2.2 1.8 2.2 2.6 V9.8 Q2.2 10.6 3 10.6 H8.8 Q9.6 10.6 9.6 9.8 V2.6 Q9.6 1.8 8.8 1.8 H7.6"/><rect x="4.2" y="1.1" width="3.4" height="1.6" rx=".6"/><path d="M4 5 H7.5 M4 7 H6 M6.2 9 L7.2 9.8 L8.8 8"/></g></svg>
  <svg class="si" style="top:130px" viewBox="0 0 12 12"><g fill="none" stroke="#62667a" stroke-width="1"><rect x="2.3" y="2.3" width="7.4" height="8.4" rx="2"/><path d="M4 1 V2.6 M8 1 V2.6 M2.5 4.8 H9.5"/></g></svg>
  <svg class="si" style="top:150px" viewBox="0 0 12 12"><g fill="none" stroke="#62667a" stroke-width="1"><circle cx="6" cy="6.8" r="4"/><path d="M4.8 1.2 H7.2 M6 1.2 V2.8 M9.3 2.8 L10 3.5"/><circle cx="6" cy="6.8" r=".7"/></g></svg>
  <svg class="si" style="top:170px" viewBox="0 0 12 12"><g fill="none" stroke="#62667a" stroke-width="1"><path d="M7 1.3 H3.4 Q2.3 1.3 2.3 2.4 V9.6 Q2.3 10.7 3.4 10.7 H8.6 Q9.7 10.7 9.7 9.6 V4 Z M7 1.3 V4 H9.7"/><path d="M4.3 7.3 L5.5 8.5 L7.7 6.3"/></g></svg>
  <svg class="si" style="top:190px" viewBox="0 0 12 12"><g fill="none" stroke="#62667a" stroke-width="1"><rect x="2.3" y="2.2" width="7.4" height="8.8" rx="1.6"/><path d="M4.6 1.6 H7.4"/><path d="M4.3 5.2 H7.7 V9 H4.3 Z M6 5.2 V9 M4.3 7.1 H7.7" stroke-width="0.8"/></g></svg>
  <svg class="si" style="top:210px" viewBox="0 0 12 12"><g fill="none" stroke="#62667a" stroke-width="1"><rect x="1.6" y="1.6" width="8.8" height="8.8" rx="2"/><path d="M6 3.5 A2.7 2.7 0 1 0 8.6 6.2 H6 Z"/><path d="M7 2.6 A2.7 2.7 0 0 1 9.4 5.1"/></g></svg>
  <svg class="si" style="top:230px" viewBox="0 0 12 12"><g fill="none" stroke="#62667a" stroke-width="1"><rect x="1.6" y="1.6" width="8.8" height="8.8" rx="1.6"/><path d="M3.4 7.8 L5.2 5.6 L6.6 6.6 L8.6 4.2"/></g></svg>
  <div class="abs" style="left:10px;top:254px;width:20px;height:1px;background:#efeff1"></div>
  <svg class="si" style="top:266px" viewBox="0 0 12 12"><g fill="none" stroke="#62667a" stroke-width="1"><circle cx="3" cy="3" r="1.5"/><circle cx="9" cy="3" r="1.5"/><circle cx="3" cy="9" r="1.5"/><circle cx="9" cy="9" r="1.5"/><path d="M4.5 3 H7.5 M4.5 9 H7.5 M3 4.5 V7.5 M9 4.5 V7.5"/></g></svg>
  <svg class="si" style="top:286px" viewBox="0 0 12 12"><g fill="none" stroke="#62667a" stroke-width="1"><path d="M6 1.6 L10.4 3.8 L6 6 L1.6 3.8 Z"/><path d="M1.6 6 L6 8.2 L10.4 6 M1.6 8.2 L6 10.4 L10.4 8.2"/></g></svg>
  <svg class="si" style="top:306px" viewBox="0 0 12 12"><g fill="none" stroke="#62667a" stroke-width="1.1"><path d="M4.2 1.5 H7.8 L10.5 4.2 V7.8 L7.8 10.5 H4.2 L1.5 7.8 V4.2 Z"/><rect x="4" y="4" width="4" height="4" rx="1"/></g></svg>
  <svg class="si" style="top:326px" viewBox="0 0 12 12"><g fill="none" stroke="#62667a" stroke-width="1"><circle cx="6" cy="6" r="1.2"/><path d="M3.8 3.8 Q2.6 6 3.8 8.2 M8.2 3.8 Q9.4 6 8.2 8.2 M2.2 2.5 Q0.3 6 2.2 9.5 M9.8 2.5 Q11.7 6 9.8 9.5"/></g></svg>
  <svg class="si" style="top:346px" viewBox="0 0 12 12"><g fill="none" stroke="#62667a" stroke-width="1"><rect x="1.6" y="1.8" width="8.8" height="8.4" rx="2.2"/><path d="M4 8.4 V5 M6 8.4 V6.4 M8 8.4 V5.6"/></g></svg>
  <svg class="abs" style="left:6.4px;top:653.1px" width="24.1" height="24.1" viewBox="0 0 14 14"><path d="M2.3 7.6 Q5.4 6.6 6.3 3.8 Q7.3 1.9 9 3.1 L13.1 7.1 Q14.3 8.4 12.8 9.5 L10.3 11.1 Q8.2 11.9 7.1 13.8 Q6 9.4 2.3 7.6 Z" fill="#0c1150"/><path d="M7.6 5.3 V12.4" stroke="#fff" stroke-width="1.15"/><path d="M10.6 7.3 L8.1 9.7" stroke="#fff" stroke-width="1.15"/><path d="M8.7 11.3 L9.9 11.3" stroke="#fff" stroke-width="0.9"/></svg>
  <div class="abs" style="left:10px;top:684px;width:20px;height:1px;background:#efeff1"></div>
  <svg class="abs" style="left:15px;top:697px" width="10" height="10" viewBox="0 0 10 10"><path d="M2 2.2 L4.8 5 L2 7.8 M7.3 2 V8" fill="none" stroke="#3f4356" stroke-width="1.2"/></svg>
</div>
<div id="strip"></div>
<div class="abs" style="left:43px;top:43px;width:14px;height:14px;border-radius:50%;background:#fff;z-index:7;box-shadow:0 0 2px rgba(0,0,0,0.04)"></div>
<svg class="abs" style="left:46px;top:46px;z-index:8" width="8" height="8" viewBox="0 0 8 8"><path d="M2.8 1.3 L5.3 4 L2.8 6.7" fill="none" stroke="#3a3e52" stroke-width="1.2"/></svg>

</body></html>
